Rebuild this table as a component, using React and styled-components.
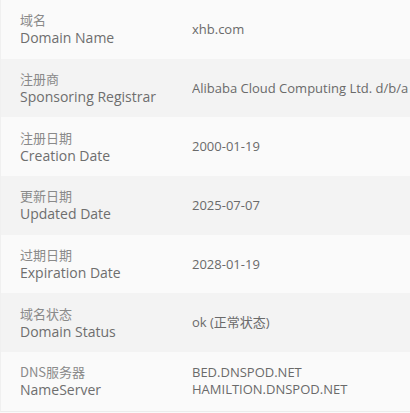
import React from 'react';
import styled, { createGlobalStyle } from 'styled-components';

const Global = createGlobalStyle`
  body {
    margin: 0;
    background: #fafafa;
    font-family: "Open Sans", "Noto Sans CJK SC", sans-serif;
  }
`;

const Table = styled.div`
  width: 410px;
  border-left: 1px solid #f0f0f0;
  border-bottom: 1px solid #ececec;
  box-sizing: border-box;
  overflow: hidden;
`;

const Row = styled.div`
  display: grid;
  grid-template-columns: 191px 1fr;
  align-items: center;
  height: 58.7px;
  background: ${p => (p.$alt ? '#f3f3f3' : '#fafafa')};
`;

const Label = styled.div`
  padding-left: 19px;
  display: flex;
  flex-direction: column;
`;

const Cn = styled.span`
  font-family: "Noto Sans CJK SC", sans-serif;
  font-size: 13px;
  line-height: 17px;
  color: #8a8a8a;
`;

const En = styled.span`
  font-size: 14px;
  line-height: 19px;
  color: #6e6e6e;
`;

const Value = styled.div`
  font-size: 13px;
  line-height: 17px;
  color: #6a6a6a;
  white-space: nowrap;
  overflow: hidden;
`;

const rows = [
  ['域名', 'Domain Name', ['xhb.com']],
  ['注册商', 'Sponsoring Registrar', ['Alibaba Cloud Computing Ltd. d/b/a HiChina (www.net.cn)']],
  ['注册日期', 'Creation Date', ['2000-01-19']],
  ['更新日期', 'Updated Date', ['2025-07-07']],
  ['过期日期', 'Expiration Date', ['2028-01-19']],
  ['域名状态', 'Domain Status', ['ok (正常状态)']],
  ['DNS服务器', 'NameServer', ['BED.DNSPOD.NET', 'HAMILTION.DNSPOD.NET']],
];

export default function App() {
  return (
    <>
      <Global />
      <Table>
        {rows.map(([cn, en, vals], i) => (
          <Row key={en} $alt={i % 2 === 1}>
            <Label>
              <Cn>{cn}</Cn>
              <En>{en}</En>
            </Label>
            <Value>
              {vals.map(v => (
                <div key={v}>{v}</div>
              ))}
            </Value>
          </Row>
        ))}
      </Table>
    </>
  );
}
